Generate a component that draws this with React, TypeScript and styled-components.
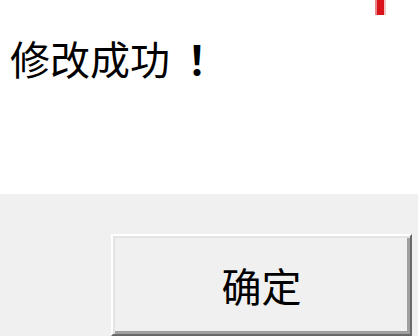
import styled, { createGlobalStyle } from 'styled-components';

const GlobalStyle = createGlobalStyle`
  html,
  body {
    margin: 0;
    padding: 0;
    background-color: #ffffff;
  }

  body {
    font-family: 'Noto Sans CJK SC', 'Noto Sans', sans-serif;
  }
`;

const StyledDialog = styled.div`
  width: 418px;
  height: 336px;
  display: flex;
  flex-flow: column nowrap;
  overflow: hidden;
`;

const MessagePanel = styled.div`
  height: 195px;
  display: flex;
  flex-flow: column nowrap;
  background-color: #ffffff;
`;

const CornerRow = styled.div`
  height: 15px;
  display: flex;
  justify-content: flex-end;
  padding-right: 34px;
`;

const CloseMark = styled.span`
  width: 7px;
  height: 15px;
  background-color: #d8141a;
  box-shadow:
    -2px 0 0 #e9868a,
    2px 0 0 #f3c4c4;
`;

const MessageText = styled.p`
  margin: 23px 0 0 10px;
  font-size: 40px;
  font-weight: 400;
  line-height: 40px;
  color: #000000;
  white-space: nowrap;
`;

// fullwidth mark centred in its cell, as in the JP glyph set
const FullwidthMark = styled.span`
  font-family: 'Noto Sans CJK JP', 'Noto Sans CJK SC', sans-serif;
  font-weight: 700;
  margin-left: 7px;
`;

const ButtonBar = styled.div`
  flex: 1;
  display: flex;
  align-items: flex-start;
  padding: 40px 0 0 111px;
  background-color: #f0f0f0;
`;

const DialogButton = styled.button`
  flex: none;
  width: 301px;
  height: 102px;
  padding: 0;
  display: flex;
  justify-content: center;
  align-items: center;

  font-family: 'Noto Sans CJK SC', 'Noto Sans', sans-serif;
  font-size: 40px;
  font-weight: 400;
  line-height: 40px;
  color: #000000;
  background-color: #f0f0f0;

  border-style: solid;
  border-width: 2px;
  border-color: #ffffff #696969 #696969 #ffffff;
  box-shadow:
    inset 2px 2px 0 #e3e3e3,
    inset -3px -3px 0 #a0a0a0;
  cursor: pointer;
`;

const App: React.FC = () => {
  return (
    <>
      <GlobalStyle />
      <StyledDialog>
        <MessagePanel>
          <CornerRow>
            <CloseMark />
          </CornerRow>
          <MessageText>
            修改成功<FullwidthMark>！</FullwidthMark>
          </MessageText>
        </MessagePanel>
        <ButtonBar>
          <DialogButton type="button">确定</DialogButton>
        </ButtonBar>
      </StyledDialog>
    </>
  );
};

export default App;
